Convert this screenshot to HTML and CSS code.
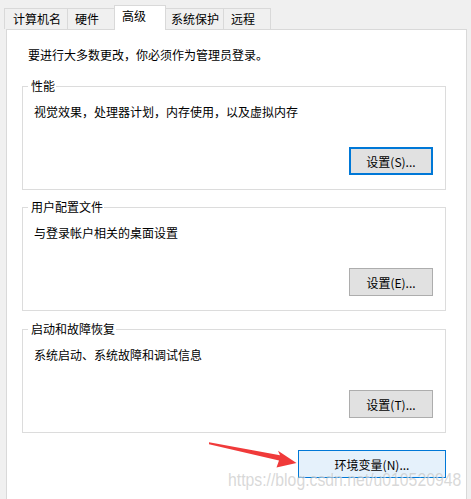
FILE: index.html
```html
<!DOCTYPE html>
<html lang="zh-CN">
<head>
<meta charset="utf-8">
<title>系统属性 - 高级</title>
<link rel="stylesheet" href="styles.css">
</head>
<body>
<div class="tabs">
  <div class="tab t1">计算机名</div>
  <div class="tab t2">硬件</div>
  <div class="tab t3 active">高级</div>
  <div class="tab t4">系统保护</div>
  <div class="tab t5">远程</div>
</div>
<div class="panel">
  <p class="intro">要进行大多数更改，你必须作为管理员登录。</p>
  <fieldset class="group">
    <legend>性能</legend>
    <p class="desc">视觉效果，处理器计划，内存使用，以及虚拟内存</p>
    <div class="actions"><button class="btn btn-default">设置(S)...</button></div>
  </fieldset>
  <fieldset class="group">
    <legend>用户配置文件</legend>
    <p class="desc">与登录帐户相关的桌面设置</p>
    <div class="actions"><button class="btn">设置(E)...</button></div>
  </fieldset>
  <fieldset class="group g3">
    <legend>启动和故障恢复</legend>
    <p class="desc">系统启动、系统故障和调试信息</p>
    <div class="actions"><button class="btn">设置(T)...</button></div>
  </fieldset>
  <div class="footer"><button class="btn btn-env">环境变量(N)...</button></div>
</div>
<svg class="arrow" width="471" height="499" viewBox="0 0 471 499">
  <polygon points="209,442.3 280,455.2 278,450.8 296.5,463 276.5,467.5 279,460.6 209,444.2" fill="#f03a3a"/>
</svg>
<div class="watermark">https://blog.csdn.net/u010520948</div>
</body>
</html>
```
FILE: styles.css
```css
html, body {
  margin: 0;
  padding: 0;
}
body {
  width: 471px;
  height: 499px;
  overflow: hidden;
  background: #f0f0f0;
  font-family: "Noto Sans CJK SC", "Noto Sans", sans-serif;
  font-size: 12px;
  color: #000;
  position: relative;
}
.tabs {
  display: flex;
  align-items: flex-end;
  height: 29px;
  padding-left: 4px;
  box-sizing: border-box;
}
.tab {
  box-sizing: border-box;
  height: 21px;
  line-height: 19px;
  padding-left: 7px;
  border: 1px solid #d9d9d9;
  border-bottom: none;
  background: #f0f0f0;
  margin-left: -1px;
  white-space: nowrap;
}
.t1 { width: 64px; margin-left: 0; padding-left: 8px; }
.t2 { width: 48px; }
.t3 { width: 52px; }
.t4 { width: 59px; padding-left: 5px; }
.t5 { width: 48px; }
.tab.active {
  height: 25px;
  line-height: 20px;
  margin-bottom: -1px;
  background: #fff;
  position: relative;
  z-index: 2;
}
.panel {
  margin-left: 6px;
  width: 461px;
  height: 480px;
  box-sizing: border-box;
  background: #fff;
  border: 1px solid #d9d9d9;
}
.intro {
  margin: 0;
  padding: 17px 0 0 21px;
  line-height: 16px;
}
.group {
  box-sizing: border-box;
  width: 424px;
  margin: 15px 0 0 15px;
  padding: 10px 12px 14px 11px;
  border: 1px solid #dcdcdc;
  min-width: 0;
}
.group + .group {
  margin-top: 9px;
}
.group.g3 {
  margin-top: 10px;
}
.group legend {
  margin-left: -6px;
  padding: 0 1px 0 3px;
  line-height: 16px;
}
.desc {
  margin: 0;
  line-height: 16px;
}
.actions {
  display: flex;
  justify-content: flex-end;
  margin-top: 27px;
}
.btn {
  box-sizing: border-box;
  width: 84px;
  height: 28px;
  padding: 0;
  margin: 0;
  font-family: "Noto Sans CJK SC", "Noto Sans", sans-serif;
  font-size: 12px;
  color: #000;
  background: #e1e1e1;
  border: 1px solid #adadad;
  border-radius: 0;
}
.btn-default {
  border: 2px solid #0078d7;
}
.footer {
  display: flex;
  justify-content: flex-end;
  width: 424px;
  margin: 17px 0 0 15px;
}
.btn-env {
  width: 148px;
  background: #e5f1fb;
  border: 1px solid #0078d7;
}
.arrow {
  position: absolute;
  left: 0;
  top: 0;
  pointer-events: none;
}
.watermark {
  position: absolute;
  left: 228px;
  top: 470px;
  font-family: "Liberation Sans", Arial, sans-serif;
  font-size: 19px;
  line-height: 20px;
  white-space: nowrap;
  color: rgba(190, 190, 190, 0.6);
  text-shadow: 1px 1px 0 rgba(255, 255, 255, 0.5);
  transform: scaleX(0.83);
  transform-origin: left top;
  pointer-events: none;
}
```
